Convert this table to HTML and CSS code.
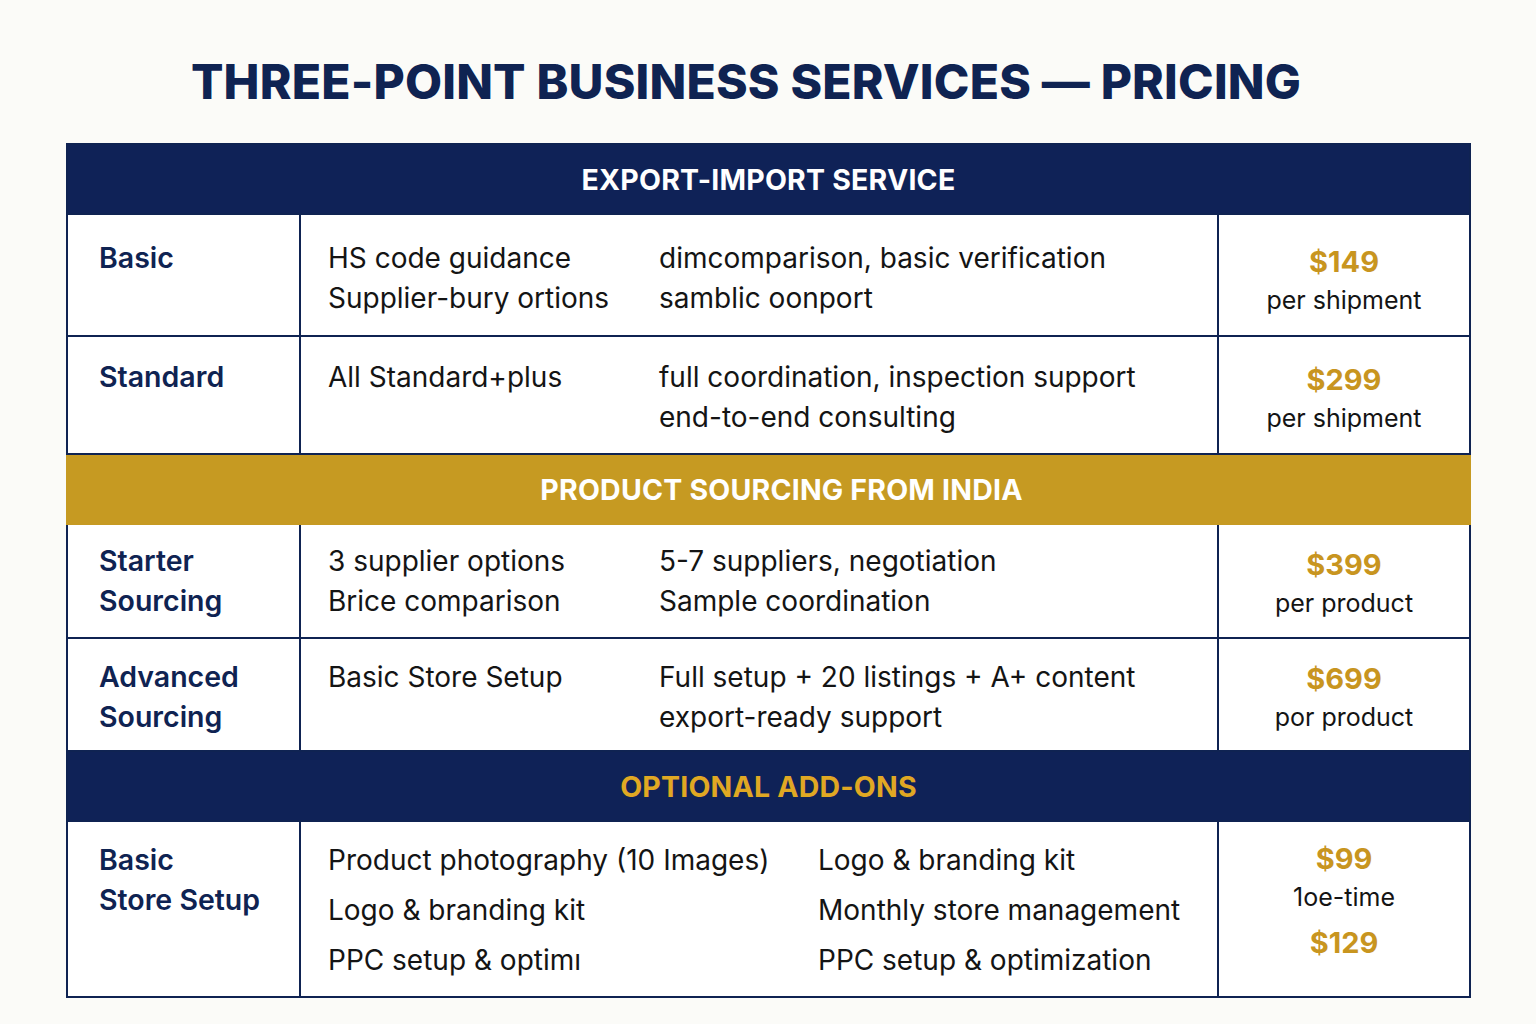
FILE: index.html
```html
<!DOCTYPE html>
<html lang="en">
<head>
<meta charset="utf-8">
<title>Three-Point Business Services — Pricing</title>
<link rel="stylesheet" href="styles.css">
</head>
<body>
<main class="page">
  <h1 class="title">THREE-POINT BUSINESS SERVICES — PRICING</h1>
  <table class="pricing">
    <colgroup>
      <col class="col-tier">
      <col class="col-desc">
      <col class="col-price">
    </colgroup>
    <tbody>
      <tr class="section section-navy">
        <th colspan="3">EXPORT-IMPORT SERVICE</th>
      </tr>
      <tr class="row row-basic">
        <td class="tier">Basic</td>
        <td class="desc">
          <div class="desc-grid">
            <div class="desc-col">
              <div>HS code guidance</div>
              <div>Supplier-bury ortions</div>
            </div>
            <div class="desc-col">
              <div>dimcomparison, basic verification</div>
              <div>samblic oonport</div>
            </div>
          </div>
        </td>
        <td class="price">
          <div class="amount">$149</div>
          <div class="unit">per shipment</div>
        </td>
      </tr>
      <tr class="row row-standard">
        <td class="tier">Standard</td>
        <td class="desc">
          <div class="desc-grid">
            <div class="desc-col">
              <div>All Standard+plus</div>
            </div>
            <div class="desc-col">
              <div>full coordination, inspection support</div>
              <div>end-to-end consulting</div>
            </div>
          </div>
        </td>
        <td class="price">
          <div class="amount">$299</div>
          <div class="unit">per shipment</div>
        </td>
      </tr>
      <tr class="section section-gold">
        <th colspan="3">PRODUCT SOURCING FROM INDIA</th>
      </tr>
      <tr class="row row-starter">
        <td class="tier">Starter<br>Sourcing</td>
        <td class="desc">
          <div class="desc-grid">
            <div class="desc-col">
              <div>3 supplier options</div>
              <div>Brice comparison</div>
            </div>
            <div class="desc-col">
              <div>5-7 suppliers, negotiation</div>
              <div>Sample coordination</div>
            </div>
          </div>
        </td>
        <td class="price">
          <div class="amount">$399</div>
          <div class="unit">per product</div>
        </td>
      </tr>
      <tr class="row row-advanced">
        <td class="tier">Advanced<br>Sourcing</td>
        <td class="desc">
          <div class="desc-grid">
            <div class="desc-col">
              <div>Basic Store Setup</div>
            </div>
            <div class="desc-col">
              <div>Full setup + 20 listings + A+ content</div>
              <div>export-ready support</div>
            </div>
          </div>
        </td>
        <td class="price">
          <div class="amount">$699</div>
          <div class="unit">por product</div>
        </td>
      </tr>
      <tr class="section section-addons">
        <th colspan="3">OPTIONAL ADD-ONS</th>
      </tr>
      <tr class="row row-addons">
        <td class="tier">Basic<br>Store Setup</td>
        <td class="desc">
          <div class="desc-grid desc-grid-wide">
            <div class="desc-col">
              <div>Product photography (10 Images)</div>
              <div>Logo &amp; branding kit</div>
              <div>PPC setup &amp; optimı</div>
            </div>
            <div class="desc-col">
              <div>Logo &amp; branding kit</div>
              <div>Monthly store management</div>
              <div>PPC setup &amp; optimization</div>
            </div>
          </div>
        </td>
        <td class="price">
          <div class="amount">$99</div>
          <div class="unit">1oe-time</div>
          <div class="amount amount-second">$129</div>
        </td>
      </tr>
    </tbody>
  </table>
</main>
</body>
</html>
```

FILE: styles.css
```css
* { box-sizing: border-box; }

html, body {
  margin: 0;
  padding: 0;
  background: #fbfbf8;
}

body {
  font-family: Inter, "Noto Sans", "Liberation Sans", sans-serif;
  color: #141414;
}

.page {
  width: 1536px;
  height: 1024px;
  padding: 52px 66px 0 66px;
}

.title {
  margin: 0;
  height: 60px;
  line-height: 60px;
  font-size: 48px;
  font-weight: 800;
  color: #0f2352;
  text-align: center;
  padding-right: 44px;
  letter-spacing: 0.2px;
}

.pricing {
  margin-top: 31px;
  width: 1403px;
  border-collapse: collapse;
  table-layout: fixed;
  background: #ffffff;
  border: 2px solid #0f2352;
}

.col-tier { width: 233px; }
.col-desc { width: 918px; }
.col-price { width: 252px; }

.pricing td {
  border: 2px solid #0f2352;
  vertical-align: top;
  padding: 0;
}

.section th {
  height: 70px;
  padding: 0;
  font-size: 28.5px;
  font-weight: 700;
  letter-spacing: 0.2px;
  text-align: center;
  vertical-align: middle;
  border: 2px solid #0f2352;
}

.section-navy th {
  background: #0f2257;
  color: #ffffff;
}

.section-gold th {
  background: #c69a22;
  color: #ffffff;
  border-color: #c69a22;
  border-top-color: #0f2352;
  padding-left: 26px;
}

.section-addons th {
  background: #0f2257;
  color: #e0a823;
}

.tier {
  padding: 22px 0 0 31px !important;
  font-size: 28.5px;
  line-height: 40px;
  font-weight: 600;
  color: #0f2352;
}

.desc {
  padding: 22px 0 0 27px !important;
  font-size: 28px;
  line-height: 40px;
  font-weight: 400;
  color: #141414;
}

.desc-grid {
  display: grid;
  grid-template-columns: 331px 1fr;
}

.desc-grid-wide {
  grid-template-columns: 490px 1fr;
  line-height: 50px;
}

.price {
  padding: 26px 0 0 0 !important;
  text-align: center;
}

.amount {
  font-size: 29px;
  line-height: 38px;
  font-weight: 700;
  color: #c8951f;
}

.unit {
  font-size: 25px;
  line-height: 38px;
  font-weight: 400;
  color: #141414;
}

.amount-second {
  margin-top: 8px;
}

.row-basic { height: 122px; }
.row-standard { height: 118px; }
.row-starter { height: 114px; }
.row-advanced { height: 113px; }
.row-addons { height: 176px; }

.row-basic .tier, .row-basic .desc { padding-top: 23px !important; }
.row-basic .price { padding-top: 28px !important; }
.row-standard .tier, .row-standard .desc { padding-top: 20px !important; }
.row-standard .price { padding-top: 24px !important; }
.row-starter .tier, .row-starter .desc { padding-top: 16px !important; }
.row-starter .price { padding-top: 21px !important; }
.row-advanced .tier, .row-advanced .desc { padding-top: 18px !important; }
.row-advanced .price { padding-top: 21px !important; }
.row-addons .tier { padding-top: 18px !important; }
.row-addons .desc { padding-top: 13px !important; }
.row-addons .price { padding-top: 18px !important; }
```
